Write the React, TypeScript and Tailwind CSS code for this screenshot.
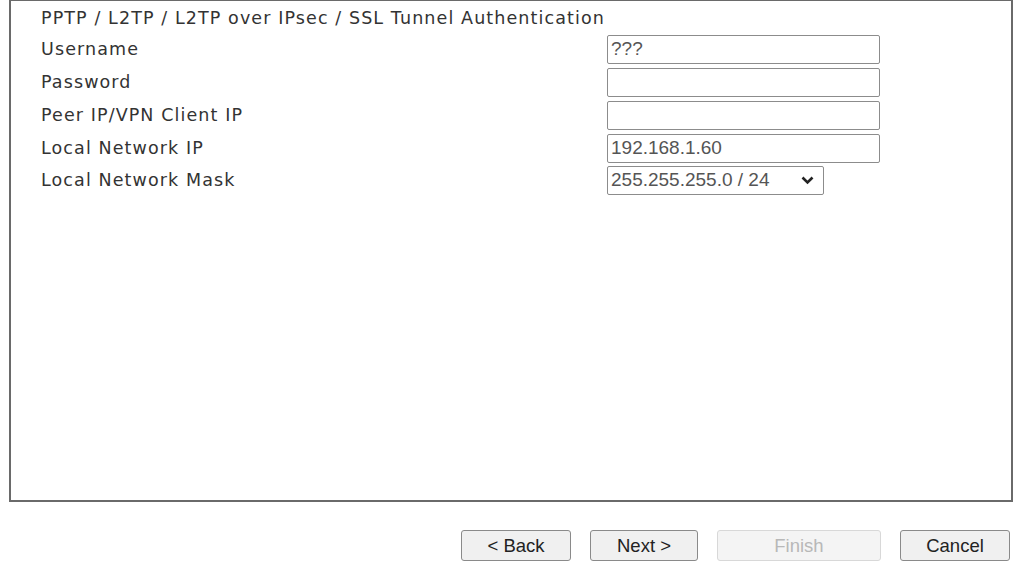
const rows = [
  { label: 'Username', value: '???' },
  { label: 'Password', value: '' },
  { label: 'Peer IP/VPN Client IP', value: '' },
  { label: 'Local Network IP', value: '192.168.1.60' },
];

const arial = { fontFamily: '"Liberation Sans", Arial, sans-serif' };

const Btn = ({ children, disabled, w }: { children: string; disabled?: boolean; w: string }) => (
  <button
    disabled={disabled}
    className={`${w} h-[31px] rounded-[3px] border text-[18.5px] ${disabled ? 'border-[#d8d8d8] bg-[#f4f4f4] text-[#b8b8b8]' : 'border-[#8a8a8a] bg-[#f0f0f0] text-[#222]'}`}
    style={arial}
  >
    {children}
  </button>
);

export default function App() {
  return (
    <div className="w-[1015px] h-[564px] bg-white overflow-hidden">
      <div className="ml-[9px] mr-[2px] h-[502px] border-2 border-t-[1px] border-[#6a6a6a] bg-white pl-[30px] pt-[2px] text-[17.5px] tracking-[1.1px] text-[#333]"
        style={{ fontFamily: '"DejaVu Sans", Verdana, sans-serif' }}>
        <div className="h-[30px] leading-[30px]">PPTP / L2TP / L2TP over IPsec / SSL Tunnel Authentication</div>
        {rows.map(r => (
          <div key={r.label} className="flex items-center h-[33px]">
            <div className="w-[566px]">{r.label}</div>
            <div className="w-[273px] h-[29px] border border-[#8c8c8c] rounded-[2px] px-[3px] flex items-center text-[19px] tracking-normal text-[#555]"
              style={arial}>{r.value}</div>
          </div>
        ))}
        <div className="flex items-center h-[31px]">
          <div className="w-[566px]">Local Network Mask</div>
          <div className="w-[217px] h-[29px] border border-[#8c8c8c] rounded-[2px] pl-[3px] pr-[9px] flex items-center justify-between text-[19px] tracking-normal text-[#555]"
            style={arial}>
            <span>255.255.255.0 / 24</span>
            <svg width="13" height="9" viewBox="0 0 13 9"><path d="M1.5 1.5 6.5 6.5l5-5" fill="none" stroke="#222" strokeWidth="2.6" /></svg>
          </div>
        </div>
      </div>
      <div className="flex justify-end gap-[19px] pr-[5px] pt-[28px]">
        <Btn w="w-[110px]">&lt; Back</Btn>
        <Btn w="w-[108px]">Next &gt;</Btn>
        <Btn w="w-[164px]" disabled>Finish</Btn>
        <Btn w="w-[110px]">Cancel</Btn>
      </div>
    </div>
  );
}
